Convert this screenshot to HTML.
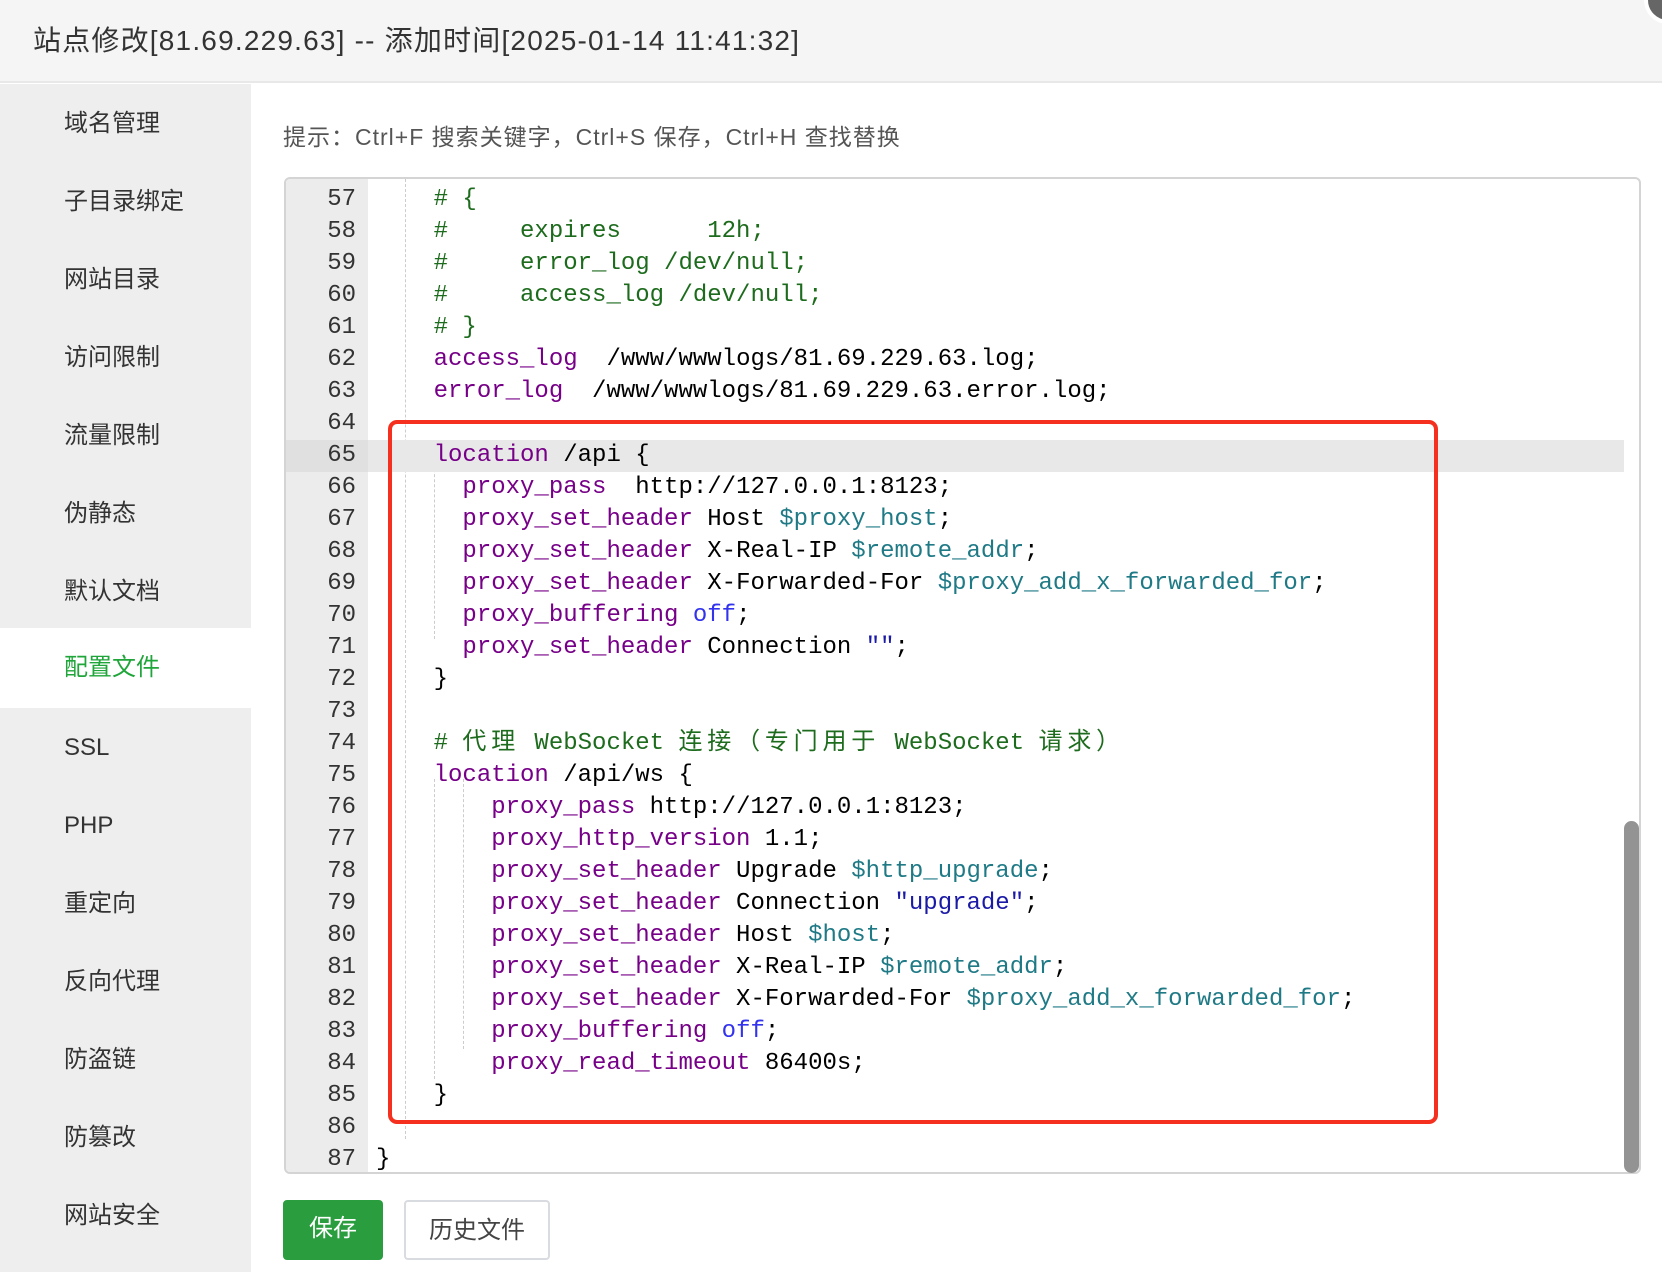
<!DOCTYPE html>
<html><head><meta charset="utf-8">
<style>
*{margin:0;padding:0;box-sizing:border-box}
body{width:1662px;height:1272px;overflow:hidden;background:#fff;font-family:"Liberation Sans","Noto Sans CJK SC",sans-serif;position:relative}
.hdr{position:absolute;left:0;top:0;width:1662px;height:83px;background:#f5f5f5;border-bottom:2px solid #e8e8e8}
.title{position:absolute;left:33px;top:19px;font-size:28px;color:#333;white-space:nowrap;letter-spacing:1.2px}
.close{position:absolute;left:1644px;top:-24px;width:48px;height:48px;border-radius:50%;background:#666;border:4px solid #fff}
.side{position:absolute;left:0;top:84px;width:251px;height:1188px;background:#eee}
.it{position:absolute;left:0;width:251px;height:80px;line-height:80px;padding-left:64px;font-size:24px;color:#333}
.it.act{background:#fff;color:#20a53a}
.hint{position:absolute;left:283px;top:118px;font-size:23px;color:#555;letter-spacing:1px;white-space:nowrap}
.ed{position:absolute;left:284px;top:177px;width:1357px;height:997px;border:2px solid #d4d4d4;border-radius:6px;overflow:hidden;background:#fff}
.gut{position:absolute;left:0;top:0;width:82px;height:100%;background:#ececec}
.ln{position:absolute;left:0;height:32px;line-height:32px;font-family:"Liberation Mono","Noto Sans CJK SC",monospace;font-size:24px;white-space:pre;color:#000;width:1338px}
.n{position:absolute;left:0;width:70px;text-align:right;color:#333}
.c{position:absolute;left:90px}
.act65{background:#e8e8e8}
.cm{color:#1d6b1d}.kw{color:#770088}.v{color:#1f7a86}.at{color:#3333ee}.s{color:#1a1aa6}
.cj{letter-spacing:4.8px}
.g{position:absolute;width:0;border-left:1px dashed #ccc}
.red{position:absolute;left:388px;top:420px;width:1050px;height:704px;border:4px solid #f5301f;border-radius:9px}
.sb{position:absolute;left:1624px;top:821px;width:15px;height:352px;background:#939393;border-radius:8px}
.btn{position:absolute;top:1200px;height:60px;line-height:58px;font-size:24px;text-align:center;border-radius:4px}
</style></head><body>
<div class="hdr"><div class="title">站点修改[81.69.229.63] -- 添加时间[2025-01-14 11:41:32]</div></div>
<div class="close"></div>
<div class="side">
<div class="it" style="top:0px">域名管理</div>
<div class="it" style="top:78px">子目录绑定</div>
<div class="it" style="top:156px">网站目录</div>
<div class="it" style="top:234px">访问限制</div>
<div class="it" style="top:312px">流量限制</div>
<div class="it" style="top:390px">伪静态</div>
<div class="it" style="top:468px">默认文档</div>
<div class="it act" style="top:544px">配置文件</div>
<div class="it" style="top:624px">SSL</div>
<div class="it" style="top:702px">PHP</div>
<div class="it" style="top:780px">重定向</div>
<div class="it" style="top:858px">反向代理</div>
<div class="it" style="top:936px">防盗链</div>
<div class="it" style="top:1014px">防篡改</div>
<div class="it" style="top:1092px">网站安全</div>
</div>
<div class="hint">提示：Ctrl+F 搜索关键字，Ctrl+S 保存，Ctrl+H 查找替换</div>
<div class="ed">
<div class="gut"></div>
<div class="g" style="left:119px;top:0;height:960px"></div>
<div class="g" style="left:148px;top:280px;height:180px"></div>
<div class="g" style="left:148px;top:600px;height:300px"></div>
<div class="g" style="left:177px;top:600px;height:270px"></div>
<div class="ln" style="top:-27px"><span class="n">56</span><span class="c">    <span class="cm">#      log_not_found off;</span></span></div>
<div class="ln" style="top:5px"><span class="n">57</span><span class="c">    <span class="cm"># {</span></span></div>
<div class="ln" style="top:37px"><span class="n">58</span><span class="c">    <span class="cm">#     expires      12h;</span></span></div>
<div class="ln" style="top:69px"><span class="n">59</span><span class="c">    <span class="cm">#     error_log /dev/null;</span></span></div>
<div class="ln" style="top:101px"><span class="n">60</span><span class="c">    <span class="cm">#     access_log /dev/null;</span></span></div>
<div class="ln" style="top:133px"><span class="n">61</span><span class="c">    <span class="cm"># }</span></span></div>
<div class="ln" style="top:165px"><span class="n">62</span><span class="c">    <span class="kw">access_log</span>  /www/wwwlogs/81.69.229.63.log;</span></div>
<div class="ln" style="top:197px"><span class="n">63</span><span class="c">    <span class="kw">error_log</span>  /www/wwwlogs/81.69.229.63.error.log;</span></div>
<div class="ln" style="top:229px"><span class="n">64</span><span class="c"></span></div>
<div class="ln act65" style="top:261px;left:0"><span class="n" style="background:#e0e0e0;width:82px;padding-right:12px">65</span><span class="c">    <span class="kw">location</span> /api {</span></div>
<div class="ln" style="top:293px"><span class="n">66</span><span class="c">      <span class="kw">proxy_pass</span>  http://127.0.0.1:8123;</span></div>
<div class="ln" style="top:325px"><span class="n">67</span><span class="c">      <span class="kw">proxy_set_header</span> Host <span class="v">$proxy_host</span>;</span></div>
<div class="ln" style="top:357px"><span class="n">68</span><span class="c">      <span class="kw">proxy_set_header</span> X-Real-IP <span class="v">$remote_addr</span>;</span></div>
<div class="ln" style="top:389px"><span class="n">69</span><span class="c">      <span class="kw">proxy_set_header</span> X-Forwarded-For <span class="v">$proxy_add_x_forwarded_for</span>;</span></div>
<div class="ln" style="top:421px"><span class="n">70</span><span class="c">      <span class="kw">proxy_buffering</span> <span class="at">off</span>;</span></div>
<div class="ln" style="top:453px"><span class="n">71</span><span class="c">      <span class="kw">proxy_set_header</span> Connection <span class="s">""</span>;</span></div>
<div class="ln" style="top:485px"><span class="n">72</span><span class="c">    }</span></div>
<div class="ln" style="top:517px"><span class="n">73</span><span class="c"></span></div>
<div class="ln" style="top:549px"><span class="n">74</span><span class="c">    <span class="cm"># <span class="cj">代理</span> WebSocket <span class="cj">连接（专门用于</span> WebSocket <span class="cj">请求）</span></span></span></div>
<div class="ln" style="top:581px"><span class="n">75</span><span class="c">    <span class="kw">location</span> /api/ws {</span></div>
<div class="ln" style="top:613px"><span class="n">76</span><span class="c">        <span class="kw">proxy_pass</span> http://127.0.0.1:8123;</span></div>
<div class="ln" style="top:645px"><span class="n">77</span><span class="c">        <span class="kw">proxy_http_version</span> 1.1;</span></div>
<div class="ln" style="top:677px"><span class="n">78</span><span class="c">        <span class="kw">proxy_set_header</span> Upgrade <span class="v">$http_upgrade</span>;</span></div>
<div class="ln" style="top:709px"><span class="n">79</span><span class="c">        <span class="kw">proxy_set_header</span> Connection <span class="s">"upgrade"</span>;</span></div>
<div class="ln" style="top:741px"><span class="n">80</span><span class="c">        <span class="kw">proxy_set_header</span> Host <span class="v">$host</span>;</span></div>
<div class="ln" style="top:773px"><span class="n">81</span><span class="c">        <span class="kw">proxy_set_header</span> X-Real-IP <span class="v">$remote_addr</span>;</span></div>
<div class="ln" style="top:805px"><span class="n">82</span><span class="c">        <span class="kw">proxy_set_header</span> X-Forwarded-For <span class="v">$proxy_add_x_forwarded_for</span>;</span></div>
<div class="ln" style="top:837px"><span class="n">83</span><span class="c">        <span class="kw">proxy_buffering</span> <span class="at">off</span>;</span></div>
<div class="ln" style="top:869px"><span class="n">84</span><span class="c">        <span class="kw">proxy_read_timeout</span> 86400s;</span></div>
<div class="ln" style="top:901px"><span class="n">85</span><span class="c">    }</span></div>
<div class="ln" style="top:933px"><span class="n">86</span><span class="c"></span></div>
<div class="ln" style="top:965px"><span class="n">87</span><span class="c">}</span></div>
</div>
<div class="sb"></div>
<div class="red"></div>
<div class="btn" style="left:283px;width:100px;background:#2a9d3f;color:#fff">保存</div>
<div class="btn" style="left:404px;width:146px;background:#fff;color:#444;border:2px solid #d8dbe0">历史文件</div>
</body></html>
